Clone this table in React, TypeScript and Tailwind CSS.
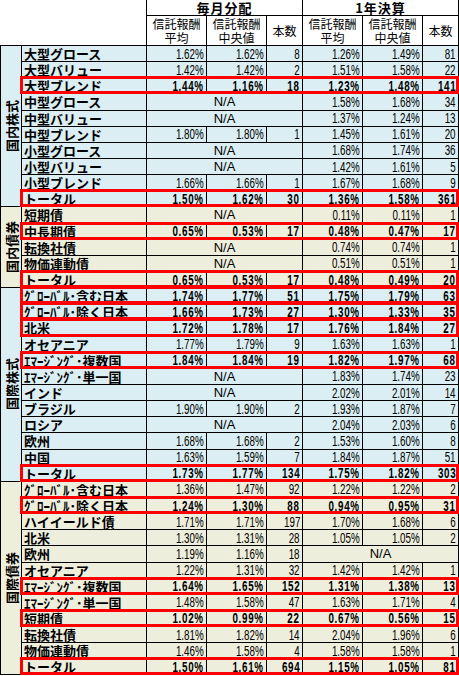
import React from "react";

type Vals = [string, string, string] | null;
type Row = { label: string; m: Vals; y: Vals; hl?: boolean };
type Section = { name: string; bg: string; rows: Row[] };

const BLUE = "bg-[#daeef3]";
const BEIGE = "bg-[#eeeedd]";

const sections: Section[] = [
  {
    name: "国内株式",
    bg: BLUE,
    rows: [
      { label: "大型グロース", m: ["1.62%", "1.62%", "8"], y: ["1.26%", "1.49%", "81"] },
      { label: "大型バリュー", m: ["1.42%", "1.42%", "2"], y: ["1.51%", "1.58%", "22"] },
      { label: "大型ブレンド", m: ["1.44%", "1.16%", "18"], y: ["1.23%", "1.48%", "141"], hl: true },
      { label: "中型グロース", m: null, y: ["1.58%", "1.68%", "34"] },
      { label: "中型バリュー", m: null, y: ["1.37%", "1.24%", "13"] },
      { label: "中型ブレンド", m: ["1.80%", "1.80%", "1"], y: ["1.45%", "1.61%", "20"] },
      { label: "小型グロース", m: null, y: ["1.68%", "1.74%", "36"] },
      { label: "小型バリュー", m: null, y: ["1.42%", "1.61%", "5"] },
      { label: "小型ブレンド", m: ["1.66%", "1.66%", "1"], y: ["1.67%", "1.68%", "9"] },
      { label: "トータル", m: ["1.50%", "1.62%", "30"], y: ["1.36%", "1.58%", "361"], hl: true },
    ],
  },
  {
    name: "国内債券",
    bg: BEIGE,
    rows: [
      { label: "短期債", m: null, y: ["0.11%", "0.11%", "1"] },
      { label: "中長期債", m: ["0.65%", "0.53%", "17"], y: ["0.48%", "0.47%", "17"], hl: true },
      { label: "転換社債", m: null, y: ["0.74%", "0.74%", "1"] },
      { label: "物価連動債", m: null, y: ["0.51%", "0.51%", "1"] },
      { label: "トータル", m: ["0.65%", "0.53%", "17"], y: ["0.48%", "0.49%", "20"], hl: true },
    ],
  },
  {
    name: "国際株式",
    bg: BLUE,
    rows: [
      { label: "ｸﾞﾛｰﾊﾞﾙ･含む日本", m: ["1.74%", "1.77%", "51"], y: ["1.75%", "1.79%", "63"], hl: true },
      { label: "ｸﾞﾛｰﾊﾞﾙ･除く日本", m: ["1.66%", "1.73%", "27"], y: ["1.30%", "1.33%", "35"], hl: true },
      { label: "北米", m: ["1.72%", "1.78%", "17"], y: ["1.76%", "1.84%", "27"], hl: true },
      { label: "オセアニア", m: ["1.77%", "1.79%", "9"], y: ["1.63%", "1.63%", "1"] },
      { label: "ｴﾏｰｼﾞﾝｸﾞ･複数国", m: ["1.84%", "1.84%", "19"], y: ["1.82%", "1.97%", "68"], hl: true },
      { label: "ｴﾏｰｼﾞﾝｸﾞ･単一国", m: null, y: ["1.83%", "1.74%", "23"] },
      { label: "インド", m: null, y: ["2.02%", "2.01%", "14"] },
      { label: "ブラジル", m: ["1.90%", "1.90%", "2"], y: ["1.93%", "1.87%", "7"] },
      { label: "ロシア", m: null, y: ["2.04%", "2.03%", "6"] },
      { label: "欧州", m: ["1.68%", "1.68%", "2"], y: ["1.53%", "1.60%", "8"] },
      { label: "中国", m: ["1.63%", "1.59%", "7"], y: ["1.84%", "1.87%", "51"] },
      { label: "トータル", m: ["1.73%", "1.77%", "134"], y: ["1.75%", "1.82%", "303"], hl: true },
    ],
  },
  {
    name: "国際債券",
    bg: BEIGE,
    rows: [
      { label: "ｸﾞﾛｰﾊﾞﾙ･含む日本", m: ["1.36%", "1.47%", "92"], y: ["1.22%", "1.22%", "2"] },
      { label: "ｸﾞﾛｰﾊﾞﾙ･除く日本", m: ["1.24%", "1.30%", "88"], y: ["0.94%", "0.95%", "31"], hl: true },
      { label: "ハイイールド債", m: ["1.71%", "1.71%", "197"], y: ["1.70%", "1.68%", "6"] },
      { label: "北米", m: ["1.30%", "1.31%", "28"], y: ["1.05%", "1.05%", "2"] },
      { label: "欧州", m: ["1.19%", "1.16%", "18"], y: null },
      { label: "オセアニア", m: ["1.22%", "1.31%", "32"], y: ["1.42%", "1.42%", "1"] },
      { label: "ｴﾏｰｼﾞﾝｸﾞ･複数国", m: ["1.64%", "1.65%", "152"], y: ["1.31%", "1.38%", "13"], hl: true },
      { label: "ｴﾏｰｼﾞﾝｸﾞ･単一国", m: ["1.48%", "1.58%", "47"], y: ["1.63%", "1.71%", "4"] },
      { label: "短期債", m: ["1.02%", "0.99%", "22"], y: ["0.67%", "0.56%", "15"], hl: true },
      { label: "転換社債", m: ["1.81%", "1.82%", "14"], y: ["2.04%", "1.96%", "6"] },
      { label: "物価連動債", m: ["1.46%", "1.58%", "4"], y: ["1.58%", "1.58%", "1"] },
      { label: "トータル", m: ["1.50%", "1.61%", "694"], y: ["1.15%", "1.05%", "81"], hl: true },
    ],
  },
];

function Num({ v, bold }: { v: string; bold?: boolean }) {
  return (
    <span
      className={
        bold
          ? "inline-block origin-right scale-x-[0.7] font-bold tracking-[1px] text-[14px] leading-none font-['Liberation_Sans',sans-serif]"
          : "inline-block origin-right scale-x-[0.7] text-[14px] leading-none font-['Liberation_Sans',sans-serif]"
      }
    >
      {v}
    </span>
  );
}

function Group({ vals, bold }: { vals: Vals; bold?: boolean }) {
  if (!vals) {
    return (
      <div className="flex w-[156px] items-center justify-center border-r border-black text-[13px] leading-none font-['Liberation_Sans',sans-serif]">
        N/A
      </div>
    );
  }
  return (
    <>
      <div className="flex w-[60px] items-center justify-end overflow-hidden border-r border-black pr-[2px]">
        <Num v={vals[0]} bold={bold} />
      </div>
      <div className="flex w-[60px] items-center justify-end overflow-hidden border-r border-black pr-[2px]">
        <Num v={vals[1]} bold={bold} />
      </div>
      <div className="flex w-[36px] items-center justify-end overflow-hidden border-r border-black pr-[2px]">
        <Num v={vals[2]} bold={bold} />
      </div>
    </>
  );
}

function DataRow({ row, bg }: { row: Row; bg: string }) {
  return (
    <div className={`relative flex h-[16.15px] border-b border-black ${bg}`}>
      <div className="flex w-[125px] items-center whitespace-nowrap border-r border-black pl-[2px] text-[13px] font-bold leading-none">
        {row.label}
      </div>
      <Group vals={row.m} bold={row.hl} />
      <Group vals={row.y} bold={row.hl} />
      {row.hl && (
        <div className="pointer-events-none absolute -left-[2px] right-0 -top-[2px] -bottom-[1px] z-10 border-[3px] border-[#ff0000]" />
      )}
    </div>
  );
}

function SubHead({ w, top, bottom, first }: { w: string; top: string; bottom: string; first?: boolean }) {
  return (
    <div
      className={`flex ${w} flex-col items-center justify-center border-b border-r border-black text-[12px] leading-[14px] ${
        first ? "border-l" : ""
      }`}
    >
      <span className="block h-[14px]">{top}</span>
      <span className="block h-[14px]">{bottom}</span>
    </div>
  );
}

export default function App() {
  return (
    <div className="h-[676px] w-[459px] overflow-hidden bg-white text-black font-['Noto_Sans_CJK_JP',sans-serif]">
      {/* header row 1 */}
      <div className="flex h-[16px]">
        <div className="w-[146px]" />
        <div className="flex w-[157px] items-center justify-center border-b border-l border-r border-black text-[13px] font-bold leading-[15px] tracking-[1px]">
          毎月分配
        </div>
        <div className="flex w-[156px] items-center justify-center border-b border-r border-black text-[13px] font-bold leading-[15px] tracking-[1px]">
          1年決算
        </div>
      </div>
      {/* header row 2 */}
      <div className="flex h-[30px]">
        <div className="w-[146px] border-b border-black" />
        <SubHead w="w-[61px]" top="信託報酬" bottom="平均" first />
        <SubHead w="w-[60px]" top="信託報酬" bottom="中央値" />
        <div className="flex w-[36px] items-center justify-center border-b border-r border-black text-[12px] leading-[14px]">
          本数
        </div>
        <SubHead w="w-[60px]" top="信託報酬" bottom="平均" />
        <SubHead w="w-[60px]" top="信託報酬" bottom="中央値" />
        <div className="flex w-[36px] items-center justify-center border-b border-r border-black text-[12px] leading-[14px]">
          本数
        </div>
      </div>
      {/* body */}
      {sections.map((s) => (
        <div key={s.name} className="flex">
          <div className={`flex w-[22px] shrink-0 items-center justify-center border-b border-l border-r border-black ${s.bg}`}>
            <span className="rotate-180 whitespace-nowrap text-[13px] font-bold leading-none [text-orientation:sideways] [writing-mode:vertical-rl]">
              {s.name}
            </span>
          </div>
          <div className="flex w-[437px] flex-col">
            {s.rows.map((r, i) => (
              <DataRow key={i} row={r} bg={s.bg} />
            ))}
          </div>
        </div>
      ))}
    </div>
  );
}
